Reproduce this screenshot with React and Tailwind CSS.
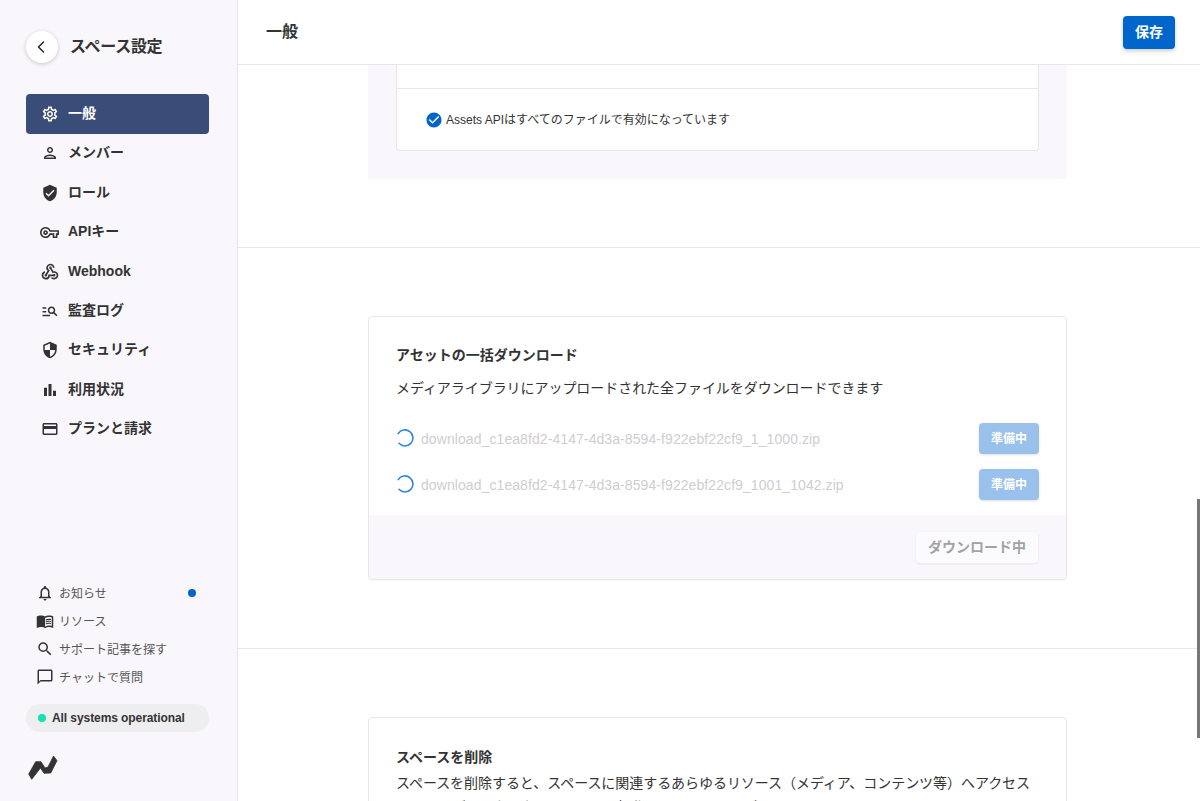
import React from "react";
import {
  MdOutlineSettings, MdOutlinePerson, MdVerifiedUser, MdOutlineVpnKey, MdOutlineWebhook, MdManageSearch,
  MdSecurity, MdBarChart, MdOutlineCreditCard, MdOutlineNotifications, MdMenuBook, MdSearch, MdChatBubbleOutline,
  MdCheckCircle,
} from "react-icons/md";
import { ChevronLeft } from "lucide-react";

const nav = [
  [MdOutlineSettings, "一般", 18, true],
  [MdOutlinePerson, "メンバー", 18],
  [MdVerifiedUser, "ロール", 18],
  [MdOutlineVpnKey, "APIキー", 19],
  [MdOutlineWebhook, "Webhook", 20],
  [MdManageSearch, "監査ログ", 18],
  [MdSecurity, "セキュリティ", 18],
  [MdBarChart, "利用状況", 18],
  [MdOutlineCreditCard, "プランと請求", 18],
];

const sub = [
  [MdOutlineNotifications, "お知らせ", true],
  [MdMenuBook, "リソース"],
  [MdSearch, "サポート記事を探す"],
  [MdChatBubbleOutline, "チャットで質問"],
];

function Spinner() {
  return (
    <svg width="18" height="18" viewBox="0 0 18 18" fill="none" className="shrink-0">
      <path d="M2.2 4.6 A8 8 0 1 1 3 14.3" stroke="#2f86e0" strokeWidth="1.6" strokeLinecap="round" />
    </svg>
  );
}

function FileRow({ name }) {
  return (
    <div className="flex h-[38px] items-center">
      <Spinner />
      <span className="ml-[7px] mt-[2px] flex-1 text-[14px] tracking-[0.08px] text-[#cfcdd2]">{name}</span>
      <button className="h-[31px] w-[60px] rounded-[4px] bg-[#99c1ec] pt-[1px] text-[12px] font-bold text-white shadow-sm">準備中</button>
    </div>
  );
}

export default function App() {
  return (
    <div className="relative flex h-[801px] w-[1200px] overflow-hidden bg-white text-[#212121] [font-family:'Liberation_Sans','Noto_Sans_CJK_JP',sans-serif]">
      <aside className="flex w-[238px] shrink-0 flex-col border-r border-[#e8e6ea] bg-[#f9f7fb] pl-[26px] pr-[28px]">
        <div className="mt-[31px] flex h-[32px] items-center gap-[12px]">
          <button className="flex h-[32px] w-[32px] items-center justify-center rounded-full bg-white pr-[2px] text-[#212121] shadow-[0_1px_4px_rgba(0,0,0,0.2)]">
            <ChevronLeft size={20} strokeWidth={1.75} />
          </button>
          <span className="text-[16px] font-bold tracking-[-0.3px] text-[#333]">スペース設定</span>
        </div>
        <nav className="mt-[31.3px] flex flex-col">
          {nav.map(([Icon, label, size, active]) => (
            <div
              key={label}
              className={`flex h-[39.4px] items-center rounded-[4px] text-[14px] font-bold ${active ? "bg-[#3a4d78] text-white" : "text-[#333]"}`}
            >
              <span className="flex w-[42px] shrink-0 justify-center pl-[5px]">
                <Icon size={size} />
              </span>
              <span className="mb-[1px]">{label}</span>
            </div>
          ))}
        </nav>
        <div className="mt-auto flex flex-col">
          {sub.map(([Icon, label, dot]) => (
            <div key={label} className="flex h-[28px] items-center pl-[10px] text-[12px] text-[#555]">
              <Icon size={18} className="shrink-0 text-[#333]" />
              <span className="ml-[5px] mt-[2px] flex-1">{label}</span>
              {dot && <span className="mr-[13px] h-[8px] w-[8px] rounded-full bg-[#0066cc]" />}
            </div>
          ))}
          <div className="mt-[13px] flex h-[28px] items-center rounded-full bg-[#eeedf0] pl-[12px] text-[12px] font-bold text-[#333]">
            <span className="h-[8px] w-[8px] rounded-full bg-[#14e0b0]" />
            <span className="ml-[6px] tracking-[-0.08px]">All systems operational</span>
          </div>
          <svg width="30" height="26" viewBox="0 0 30 26" className="mb-[20px] ml-[2px] mt-[23px]">
            <path d="M3.7 24.3 L0.7 19 L7.7 6.7 L13 6.7 L17 13 L20 12 L25.5 1 L29 5.7 L22.7 18 L16 18.3 L12.5 13 Z" fill="#333" stroke="#333" strokeWidth="0.8" />
          </svg>
        </div>
      </aside>

      <main className="flex min-w-0 flex-1 flex-col">
        <header className="flex h-[65px] shrink-0 items-center justify-between border-b border-[#e8e6ea] pl-[28px] pr-[25px]">
          <h1 className="text-[16px] font-bold text-[#333]">一般</h1>
          <button className="h-[33px] w-[52px] rounded-[4px] bg-[#0066cc] text-[14px] font-bold text-white shadow-[0_2px_4px_rgba(0,0,0,0.2)]">保存</button>
        </header>

        <div className="flex min-h-0 flex-1 flex-col overflow-hidden">
          <section className="h-[183px] shrink-0 border-b border-[#e8e6ea]">
            <div className="ml-[130px] mr-[133px] h-[114px] bg-[#f9f7fb] px-[28px]">
              <div className="h-[86px] rounded-b-[4px] border-x border-b border-[#e8e6ea] bg-white">
                <div className="h-[24px] border-b border-[#e8e6ea]" />
                <div className="flex h-[61px] items-center pl-[28px] text-[12px] text-[#333]">
                  <MdCheckCircle size={18} className="text-[#0066cc]" />
                  <span className="ml-[3px] mt-[1px]">Assets APIはすべてのファイルで有効になっています</span>
                </div>
              </div>
            </div>
          </section>

          <section className="h-[401px] shrink-0 border-b border-[#e8e6ea] pt-[68px]">
            <div className="ml-[130px] mr-[133px] h-[264px] overflow-hidden rounded-[4px] border border-[#e8e6ea] shadow-[0_1px_1px_rgba(0,0,0,0.03)]">
              <div className="h-[198px] px-[27px] pt-[28px]">
                <h2 className="text-[14px] leading-[20px] font-bold text-[#333]">アセットの一括ダウンロード</h2>
                <p className="mt-[13px] text-[14px] leading-[20px] tracking-[-0.05px] text-[#333]">メディアライブラリにアップロードされた全ファイルをダウンロードできます</p>
                <div className="mt-[21px] flex flex-col gap-[8px]">
                  <FileRow name="download_c1ea8fd2-4147-4d3a-8594-f922ebf22cf9_1_1000.zip" />
                  <FileRow name="download_c1ea8fd2-4147-4d3a-8594-f922ebf22cf9_1001_1042.zip" />
                </div>
              </div>
              <div className="flex h-[64px] items-start justify-end bg-[#f9f7fb] pr-[28px] pt-[17px]">
                <button className="h-[31px] w-[122px] rounded-[4px] bg-[#fbfafc] text-[14px] font-bold text-[#a3a1a6] shadow-[0_1px_3px_rgba(0,0,0,0.08)]">ダウンロード中</button>
              </div>
            </div>
          </section>

          <section className="shrink-0 pt-[68px]">
            <div className="ml-[130px] mr-[133px] h-[200px] rounded-[4px] border border-[#e8e6ea] px-[27px] pt-[29px]">
              <h2 className="text-[14px] leading-[20px] font-bold text-[#333]">スペースを削除</h2>
              <p className="mt-[4px] text-[14px] leading-[24px] tracking-[-0.05px] text-[#333]">スペースを削除すると、スペースに関連するあらゆるリソース（メディア、コンテンツ等）へアクセスすることができなくなります。この操作は元に戻すことができません。</p>
            </div>
          </section>
        </div>
      </main>
      <div className="absolute right-0 top-[499px] h-[239px] w-[3px] bg-[#777]" />
    </div>
  );
}
